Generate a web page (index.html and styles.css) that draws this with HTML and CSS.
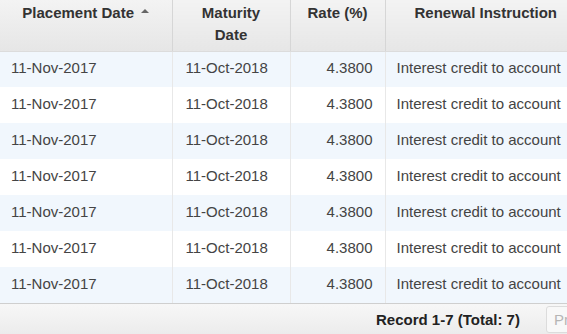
FILE: index.html
```html
<!DOCTYPE html>
<html>
<head>
<meta charset="utf-8">
<link rel="stylesheet" href="styles.css">
</head>
<body>
<div class="grid-wrap">
  <table class="grid">
    <colgroup>
      <col class="c1"><col class="c2"><col class="c3"><col class="c4">
    </colgroup>
    <thead>
      <tr>
        <th><span class="sortable">Placement Date <span class="sort-up"></span></span></th>
        <th>Maturity<br>Date</th>
        <th>Rate (%)</th>
        <th class="left">Renewal Instruction</th>
      </tr>
    </thead>
    <tbody>
      <tr><td>11-Nov-2017</td><td class="mid">11-Oct-2018</td><td class="num">4.3800</td><td>Interest credit to account</td></tr>
      <tr><td>11-Nov-2017</td><td class="mid">11-Oct-2018</td><td class="num">4.3800</td><td>Interest credit to account</td></tr>
      <tr><td>11-Nov-2017</td><td class="mid">11-Oct-2018</td><td class="num">4.3800</td><td>Interest credit to account</td></tr>
      <tr><td>11-Nov-2017</td><td class="mid">11-Oct-2018</td><td class="num">4.3800</td><td>Interest credit to account</td></tr>
      <tr><td>11-Nov-2017</td><td class="mid">11-Oct-2018</td><td class="num">4.3800</td><td>Interest credit to account</td></tr>
      <tr><td>11-Nov-2017</td><td class="mid">11-Oct-2018</td><td class="num">4.3800</td><td>Interest credit to account</td></tr>
      <tr><td>11-Nov-2017</td><td class="mid">11-Oct-2018</td><td class="num">4.3800</td><td>Interest credit to account</td></tr>
    </tbody>
  </table>
  <div class="pager">
    <span class="record">Record 1-7 (Total: 7)</span>
    <button class="btn">Prev</button>
    <button class="btn">Next</button>
  </div>
</div>
</body>
</html>
```
FILE: styles.css
```css
html, body {
  margin: 0;
  padding: 0;
  background: #fff;
  overflow: hidden;
}
body {
  font-family: "Liberation Sans", Arial, sans-serif;
  color: #333;
}
.grid-wrap {
  width: 567px;
  height: 334px;
  overflow: hidden;
}
.grid {
  border-collapse: collapse;
  table-layout: fixed;
  width: 640px;
  font-size: 15px;
}
.c1 { width: 172px; }
.c2 { width: 118px; }
.c3 { width: 95px; }
.c4 { width: 255px; }
.grid th {
  height: 51px;
  box-sizing: border-box;
  padding: 2px 4px 0;
  vertical-align: top;
  line-height: 22px;
  font-weight: bold;
  font-size: 15px;
  color: #333;
  text-align: center;
  background: linear-gradient(#f3f3f3, #e6e6e6);
  border-right: 1px solid #d6d6d6;
  border-bottom: 1px solid #dcdcdc;
}
.grid th.left {
  text-align: left;
  padding-left: 29px;
  white-space: nowrap;
}
.sortable {
  white-space: nowrap;
}
.sort-up {
  display: inline-block;
  width: 0;
  height: 0;
  border-left: 4px solid transparent;
  border-right: 4px solid transparent;
  border-bottom: 4px solid #666;
  vertical-align: 5px;
  margin-left: 3px;
}
.grid td {
  height: 36px;
  box-sizing: border-box;
  padding: 0 10px 4px 11px;
  white-space: nowrap;
  overflow: hidden;
  color: #444;
  border-right: 1px solid #e8e8e8;
}
.grid td.mid {
  padding-left: 13px;
}
.grid td.num {
  text-align: right;
  padding-right: 12px;
}
.grid tbody tr:nth-child(odd) td {
  background: #f1f7fd;
}
.grid tbody tr:nth-child(even) td {
  background: #fff;
}
.pager {
  height: 31px;
  box-sizing: border-box;
  border-top: 1px solid #cfcfcf;
  background: linear-gradient(#f7f7f7, #ececec);
  display: flex;
  align-items: center;
  gap: 26px;
  padding-left: 376px;
  width: 700px;
}
.record {
  font-weight: bold;
  font-size: 15px;
  color: #222;
  white-space: nowrap;
}
.btn {
  font-family: "Liberation Sans", Arial, sans-serif;
  font-size: 15px;
  color: #b5b5b5;
  background: #f8f8f8;
  border: 1px solid #dcdcdc;
  border-radius: 3px;
  height: 27px;
  padding: 0 7px;
}
```
